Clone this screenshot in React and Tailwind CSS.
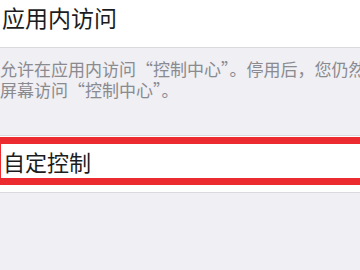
export default function App() {
  const font = { fontFamily: '"Noto Sans CJK SC", "Noto Sans", sans-serif' };
  return (
    <div className="h-[270px] w-[360px] overflow-hidden bg-[#efeff4]" style={font}>
      <div className="flex h-[48px] items-start border-b border-[#d9d9de] bg-white pl-[2px] pt-[3px]">
        <span className="text-[23px] leading-[29px] text-[#1c1c1e]">应用内访问</span>
      </div>

      <div className="h-[87px] overflow-hidden pl-[0px] pt-[10px] text-[17px] leading-[21px] text-[#8a8a8f]">
        <div className="whitespace-nowrap">允许在应用内访问“控制中心”。停用后，您仍然可以从主</div>
        <div className="whitespace-nowrap">屏幕访问“控制中心”。</div>
      </div>

      <div className="border-y border-[#d9d9de] bg-white pt-[1px] pb-[7px]">
        <div className="flex h-[48px] items-center border-y-[7px] border-l border-[#ec2b30] pl-[2px]">
          <span className="text-[22px] leading-[28px] text-[#1c1c1e]">自定控制</span>
        </div>
      </div>
    </div>
  );
}
